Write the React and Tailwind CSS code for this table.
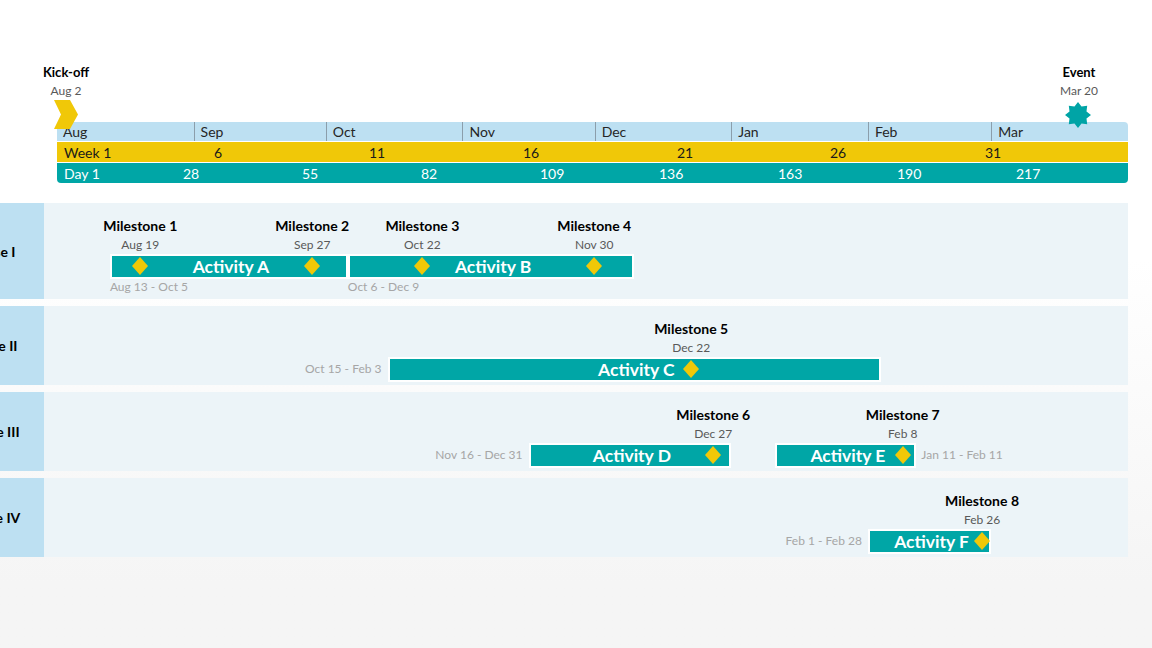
const PX = 4.407;
const X0 = 57;
const dx = (d) => X0 + d * PX;

const months = [
  { name: "Aug", d: 0 },
  { name: "Sep", d: 31 },
  { name: "Oct", d: 61 },
  { name: "Nov", d: 92 },
  { name: "Dec", d: 122 },
  { name: "Jan", d: 153 },
  { name: "Feb", d: 184 },
  { name: "Mar", d: 212 },
];

const weeks = [
  { t: "Week 1", x: 64 },
  { t: "6", x: 214 },
  { t: "11", x: 369 },
  { t: "16", x: 523 },
  { t: "21", x: 677 },
  { t: "26", x: 830 },
  { t: "31", x: 985 },
];

const days = [
  { t: "Day 1", x: 64 },
  { t: "28", x: 183 },
  { t: "55", x: 302 },
  { t: "82", x: 421 },
  { t: "109", x: 540 },
  { t: "136", x: 659 },
  { t: "163", x: 778 },
  { t: "190", x: 897 },
  { t: "217", x: 1016 },
];

const rows = [
  {
    label: "Phase I",
    tall: true,
    bars: [
      { name: "Activity A", s: 12, e: 65, range: "Aug 13 - Oct 5", at: "below" },
      { name: "Activity B", s: 66, e: 130, range: "Oct 6 - Dec 9", at: "below" },
    ],
    ms: [
      { name: "Milestone 1", date: "Aug 19", d: 18 },
      { name: "Milestone 2", date: "Sep 27", d: 57 },
      { name: "Milestone 3", date: "Oct 22", d: 82 },
      { name: "Milestone 4", date: "Nov 30", d: 121 },
    ],
  },
  {
    label: "Phase II",
    bars: [{ name: "Activity C", s: 75, e: 186, range: "Oct 15 - Feb 3", at: "left" }],
    ms: [{ name: "Milestone 5", date: "Dec 22", d: 143 }],
  },
  {
    label: "Phase III",
    bars: [
      { name: "Activity D", s: 107, e: 152, range: "Nov 16 - Dec 31", at: "left" },
      { name: "Activity E", s: 163, e: 194, range: "Jan 11 - Feb 11", at: "right" },
    ],
    ms: [
      { name: "Milestone 6", date: "Dec 27", d: 148 },
      { name: "Milestone 7", date: "Feb 8", d: 191 },
    ],
  },
  {
    label: "Phase IV",
    bars: [{ name: "Activity F", s: 184, e: 211, range: "Feb 1 - Feb 28", at: "left" }],
    ms: [{ name: "Milestone 8", date: "Feb 26", d: 209 }],
  },
];

function Diamond() {
  return (
    <svg width="16" height="18" viewBox="0 0 16 18">
      <polygon points="8,0 16,9 8,18 0,9" fill="#f0c808" />
    </svg>
  );
}

function Star() {
  const pts = [];
  for (let i = 0; i < 16; i++) {
    const r = i % 2 === 0 ? 13 : 9.2;
    const a = (Math.PI / 8) * i - Math.PI / 2;
    pts.push(`${13 + r * Math.cos(a)},${13 + r * Math.sin(a)}`);
  }
  return (
    <svg width="26" height="26" viewBox="0 0 26 26">
      <polygon points={pts.join(" ")} fill="#00a4a6" />
    </svg>
  );
}

function Chevron() {
  return (
    <svg width="25" height="29" viewBox="0 0 25 29">
      <polygon points="0,0 16,0 24,14.5 16,29 0,29 7,14.5" fill="#f0c808" />
    </svg>
  );
}

function Header() {
  return (
    <div className="relative h-[203px]">
      <div className="absolute left-[66px] top-[64px] -translate-x-1/2 flex flex-col items-center">
        <span className="text-[13px] font-bold text-black leading-4">Kick-off</span>
        <span className="text-[12px] text-[#595959] leading-4 mt-[3px]">Aug 2</span>
      </div>
      <div className="absolute left-[1079px] top-[64px] -translate-x-1/2 flex flex-col items-center">
        <span className="text-[13px] font-bold text-black leading-4">Event</span>
        <span className="text-[12px] text-[#595959] leading-4 mt-[3px]">Mar 20</span>
      </div>

      <div className="absolute left-[57px] top-[122px] w-[1071px] flex flex-col gap-[1px]">
        <div className="relative h-[19px] bg-[#bde0f2] rounded-t-[4px]">
          {months.map((m, i) => (
            <div
              key={m.name}
              className={"absolute top-0 h-full flex items-center pl-[6px] text-[14px] text-[#262626] " + (i > 0 ? "border-l border-[#8b9eab]" : "")}
              style={{ left: dx(m.d) - X0 }}
            >
              {m.name}
            </div>
          ))}
        </div>
        <div className="relative h-[20px] bg-[#f0c808]">
          {weeks.map((w) => (
            <span key={w.t} className="absolute top-0 h-full flex items-center text-[14px] text-[#1a1a1a]" style={{ left: w.x - X0 }}>
              {w.t}
            </span>
          ))}
        </div>
        <div className="relative h-[20px] bg-[#00a6a6] rounded-b-[4px]">
          {days.map((w) => (
            <span key={w.t} className="absolute top-0 h-full flex items-center text-[14px] text-white" style={{ left: w.x - X0 }}>
              {w.t}
            </span>
          ))}
        </div>
      </div>

      <div className="absolute left-[54px] top-[100px]">
        <Chevron />
      </div>
      <div className="absolute left-[1065px] top-[102px]">
        <Star />
      </div>
    </div>
  );
}

function Row({ row }) {
  return (
    <div className={"relative flex w-[1128px] " + (row.tall ? "h-[96px]" : "h-[79px]")}>
      <div className="-ml-[58px] w-[102px] shrink-0 bg-[#bde0f2] flex items-center justify-center">
        <span className="text-[14px] font-bold text-black">{row.label}</span>
      </div>
      <div className="flex-1 bg-[#ecf4f8]" />

      {row.bars.map((b) => {
        const left = dx(b.s);
        const right = dx(b.e + 1);
        return (
          <div key={b.name}>
            <div
              className="absolute top-[51px] h-[25px] border-2 border-white bg-[#00a6a6] flex items-center justify-center"
              style={{ left: left, width: right - left }}
            >
              <span className="text-[17.5px] font-bold text-white leading-none pl-1">{b.name}</span>
            </div>
            {b.at === "below" && (
              <span className="absolute top-[76px] text-[12px] text-[#a6a6a6] leading-4" style={{ left: left }}>
                {b.range}
              </span>
            )}
            {b.at === "left" && (
              <span
                className="absolute top-[55px] text-[12px] text-[#a6a6a6] leading-4 -translate-x-full"
                style={{ left: left - 6 }}
              >
                {b.range}
              </span>
            )}
            {b.at === "right" && (
              <span className="absolute top-[55px] text-[12px] text-[#a6a6a6] leading-4" style={{ left: right + 5 }}>
                {b.range}
              </span>
            )}
          </div>
        );
      })}

      {row.ms.map((m) => {
        const x = dx(m.d) + 4;
        return (
          <div key={m.name}>
            <div className="absolute top-[15px] -translate-x-1/2 flex flex-col items-center" style={{ left: x }}>
              <span className="text-[14px] font-bold text-black leading-4 whitespace-nowrap">{m.name}</span>
              <span className="text-[12px] text-[#595959] leading-4 mt-[3px] whitespace-nowrap">{m.date}</span>
            </div>
            <div className="absolute top-[54px] -translate-x-1/2" style={{ left: x }}>
              <Diamond />
            </div>
          </div>
        );
      })}
    </div>
  );
}

export default function App() {
  return (
    <div
      className="w-[1152px] h-[648px] overflow-hidden bg-gradient-to-b from-white from-[40%] to-[#f5f5f5] to-[90%]"
      style={{ fontFamily: "Lato, 'Open Sans', sans-serif" }}
    >
      <Header />
      <div className="flex flex-col gap-[7px]">
        {rows.map((r) => (
          <Row key={r.label} row={r} />
        ))}
      </div>
    </div>
  );
}
